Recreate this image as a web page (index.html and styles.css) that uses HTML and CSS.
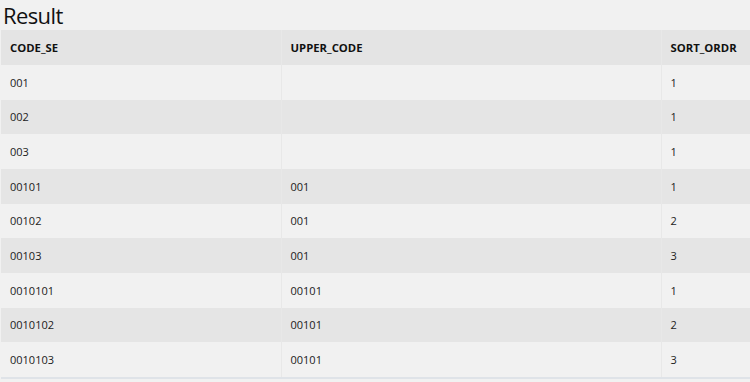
FILE: index.html
```html
<!DOCTYPE html>
<html>
<head>
<meta charset="utf-8">
<link rel="stylesheet" href="styles.css">
</head>
<body>
<h1 class="title">Result</h1>
<table class="grid">
  <colgroup><col class="c1"><col class="c2"><col class="c3"></colgroup>
  <thead>
    <tr><th>CODE_SE</th><th>UPPER_CODE</th><th>SORT_ORDR</th></tr>
  </thead>
  <tbody>
    <tr><td>001</td><td></td><td>1</td></tr>
    <tr><td>002</td><td></td><td>1</td></tr>
    <tr><td>003</td><td></td><td>1</td></tr>
    <tr><td>00101</td><td>001</td><td>1</td></tr>
    <tr><td>00102</td><td>001</td><td>2</td></tr>
    <tr><td>00103</td><td>001</td><td>3</td></tr>
    <tr><td>0010101</td><td>00101</td><td>1</td></tr>
    <tr><td>0010102</td><td>00101</td><td>2</td></tr>
    <tr><td>0010103</td><td>00101</td><td>3</td></tr>
  </tbody>
</table>
</body>
</html>
```
FILE: styles.css
```css
html, body {
  margin: 0;
  padding: 0;
  background: #f1f1f1;
  overflow: hidden;
}
body {
  padding-left: 1px;
  font-family: "Open Sans", "Noto Sans", sans-serif;
  color: #1b1b1b;
}
.title {
  margin: 0;
  height: 30px;
  font-size: 22px;
  line-height: 30px;
  font-weight: 500;
  letter-spacing: -0.6px;
  padding-left: 2px;
  color: #111;
}
.grid {
  border-collapse: collapse;
  table-layout: fixed;
  width: 749px;
  border-bottom: 2px solid #dfe3e8;
}
.c1 { width: 280px; }
.c2 { width: 380px; }
.c3 { width: 89px; }
.grid th, .grid td {
  text-align: left;
  padding: 0 0 0 9px;
  font-size: 11px;
  white-space: nowrap;
}
.grid th + th, .grid td + td {
  border-left: 1px solid #e8e8e8;
}
.grid th {
  height: 35px;
  background: #e4e4e4;
  font-weight: 700;
  font-size: 11.3px;
  color: #111;
}
.grid td {
  height: 34.67px;
}
.grid tbody tr:nth-child(odd) { background: #f1f1f1; }
.grid tbody tr:nth-child(even) { background: #e5e5e5; }
```
